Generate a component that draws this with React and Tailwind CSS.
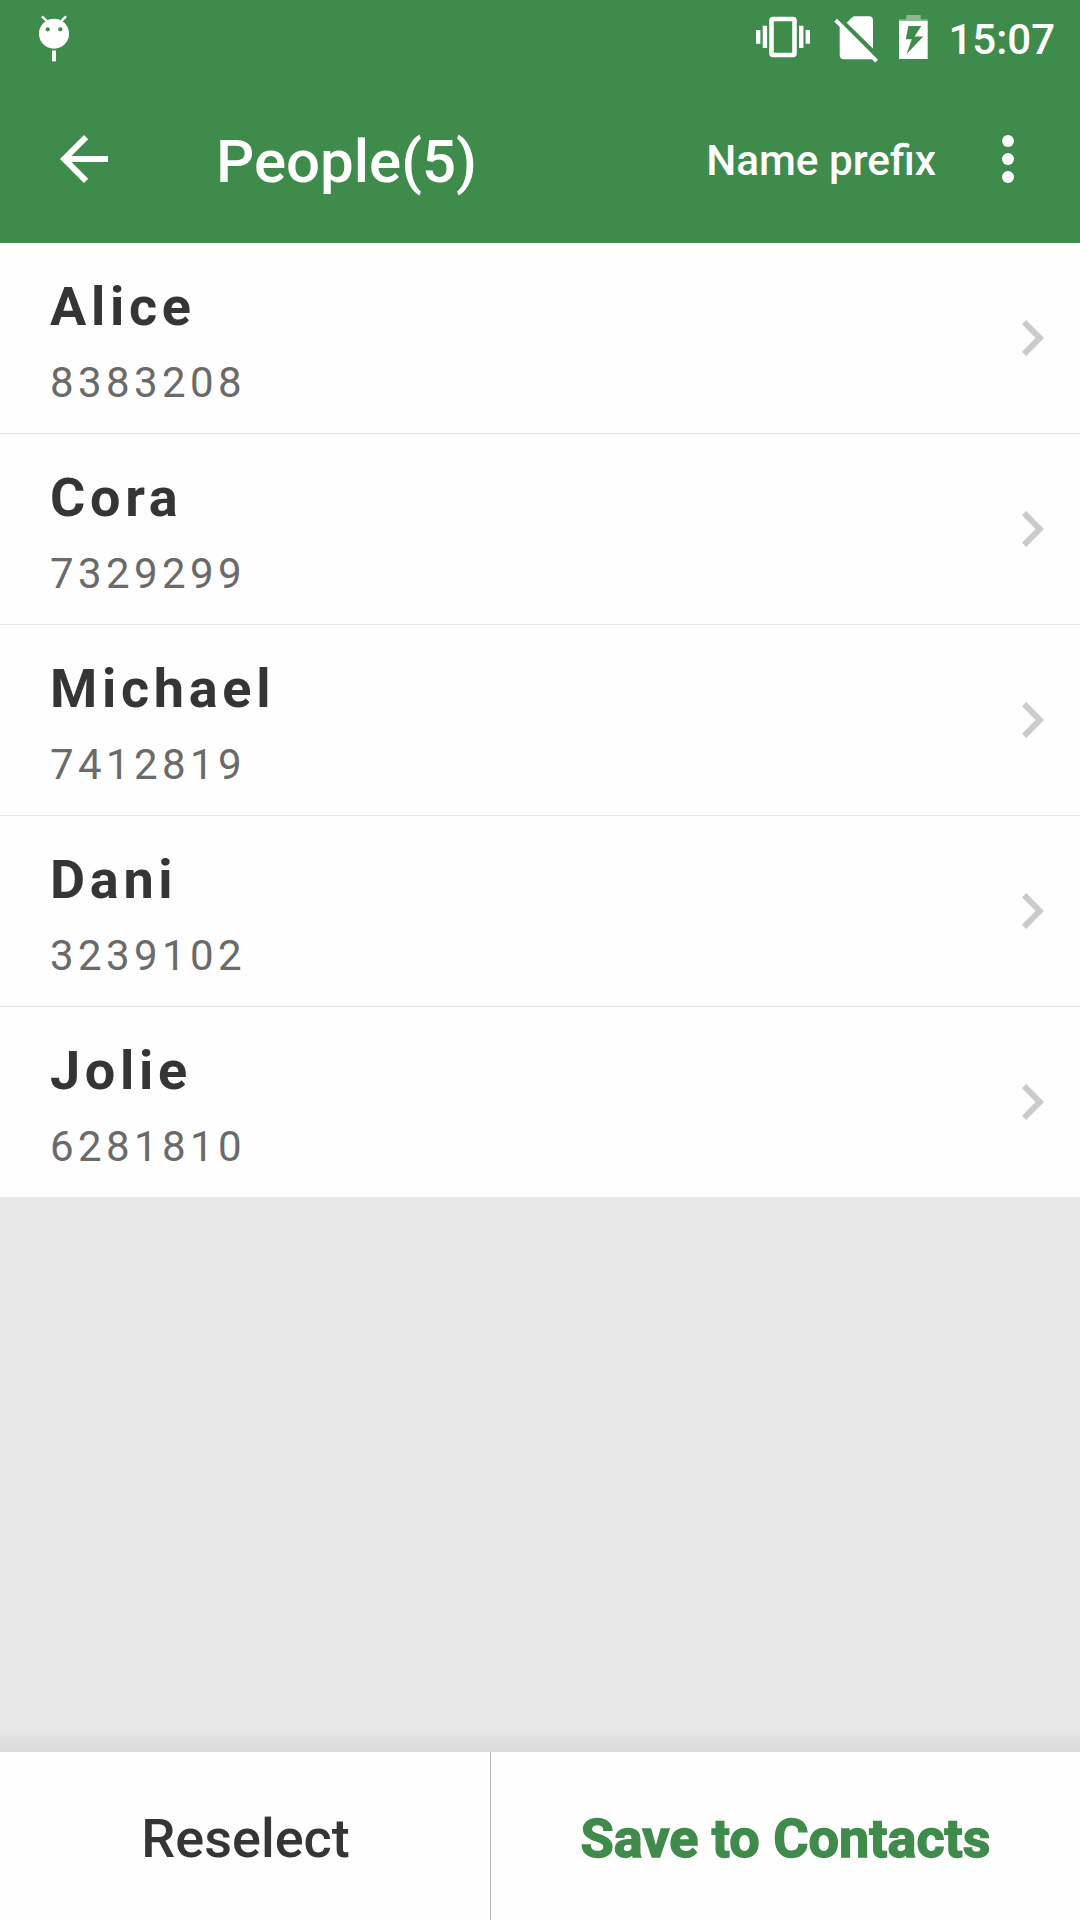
const people = [
  { name: 'Alice', number: '8383208' },
  { name: 'Cora', number: '7329299' },
  { name: 'Michael', number: '7412819' },
  { name: 'Dani', number: '3239102' },
  { name: 'Jolie', number: '6281810' },
];

function DebugIcon() {
  return (
    <svg viewBox="36 12 36 52" className="ml-9 mt-3 h-[52px] w-9">
      <path d="M42 16.3l5 5M66 16.3l-5 5" stroke="white" strokeWidth="2.4" />
      <circle cx="54" cy="33.7" r="15" fill="white" />
      <circle cx="47.7" cy="29.3" r="2.1" fill="#3f8b4c" />
      <circle cx="60.3" cy="29.3" r="2.1" fill="#3f8b4c" />
      <path d="M52 50.5h4v10.8h-4z" fill="white" />
    </svg>
  );
}

function VibrateIcon() {
  return (
    <svg viewBox="756 12 54 52" className="mt-3 h-[52px] w-[54px]">
      <rect x="771.5" y="19" width="23" height="36" rx="1.5" fill="none" stroke="white" strokeWidth="4.6" />
      <path d="M756 30h4.4v13.7H756zM762.7 25.7h4.4V48h-4.4zM799 25.7h4.4V48H799zM805.6 30h4.4v13.7h-4.4z" fill="white" />
    </svg>
  );
}

function NoSimIcon() {
  return (
    <svg viewBox="832 12 48 52" className="ml-[22px] mt-3 h-[52px] w-12" fill="white">
      <path d="M846.7 22.7l5-5q1.4-1.4 3.4-1.4H869q4 0 4 4v28.2z" />
      <path d="M834.2 21.6l2.8-2.8 41 41-2.8 2.8-3.4-3.4H844q-4.3 0-4.3-4.3V27.1z" />
    </svg>
  );
}

function BatteryIcon() {
  return (
    <svg viewBox="899 12 29 52" className="ml-[19px] mt-3 h-[52px] w-[29px]" fill="white">
      <path d="M906.3 15h14.4v4.3h7V21H899v-1.7h7.3z" opacity="0.4" />
      <path
        fillRule="evenodd"
        d="M899 21h28.7v38H899zM908.3 26L905.8 39.3H911.8L906.6 54L923.3 36.5H914.6L921.3 26z"
      />
    </svg>
  );
}

function StatusBar() {
  return (
    <div className="flex h-[75px] items-start justify-between pr-[25px]">
      <DebugIcon />
      <div className="flex items-start">
        <VibrateIcon />
        <NoSimIcon />
        <BatteryIcon />
        <span className="ml-5 mt-[15px] text-[42px] leading-[50px] font-medium">15:07</span>
      </div>
    </div>
  );
}

function AppBar() {
  return (
    <div className="flex h-42 items-center pr-[66px] pl-[60px]">
      <svg viewBox="0 0 48 48" className="h-12 w-12 shrink-0" fill="white">
        <path d="M48 21H11.5L28.2 4.2 24 0 0 24l24 24 4.2-4.2L11.5 27H48z" />
      </svg>
      <h1 className="ml-27 pt-1.5 text-[60px] leading-[70px] font-medium">People(5)</h1>
      <button className="ml-auto pt-[3px] text-[42.3px] leading-[50px] font-medium">Name prefix</button>
      <svg viewBox="0 0 12 48" className="ml-[66px] h-12 w-3 shrink-0" fill="white">
        <circle cx="6" cy="6" r="6" />
        <circle cx="6" cy="24" r="6" />
        <circle cx="6" cy="42" r="6" />
      </svg>
    </div>
  );
}

function PersonRow({ person }) {
  return (
    <li className="flex h-[191px] items-start justify-between border-b border-[#e5e5e5] bg-[#fefefe] pr-9 pl-[50px] last:h-[190px] last:border-b-0">
      <div className="pt-8">
        <p className="text-[54px] leading-[63px] font-bold tracking-[0.087em] text-[#353535]">{person.name}</p>
        <p className="mt-5 text-[42px] leading-[50px] tracking-[0.105em] text-[#6a6a6a]">{person.number}</p>
      </div>
      <svg viewBox="0 0 22 36" className="mt-[77px] h-9 w-[22px]" fill="#cbcbcb">
        <path d="M4.2 0L0 4.2 13.6 18 0 31.8 4.2 36 22 18z" />
      </svg>
    </li>
  );
}

export default function App() {
  return (
    <div className="flex h-[1920px] w-[1080px] flex-col overflow-hidden bg-[#e8e8e8] font-[Roboto,sans-serif]">
      <header className="bg-[#3f8b4c] text-white">
        <StatusBar />
        <AppBar />
      </header>

      <ul>
        {people.map((person) => (
          <PersonRow key={person.name} person={person} />
        ))}
      </ul>

      {/* Bottom actions */}
      <div className="mt-auto h-6 bg-linear-to-t from-[#d9d9d9] to-[#e8e8e8]" />
      <footer className="flex h-[168px] bg-[#fefefe] text-[54px] leading-[64px]">
        <button className="w-[491px] border-r border-[#bbb] pt-1.5 pl-px font-medium text-[#353535]">Reselect</button>
        <button className="flex-1 pt-1.5 font-bold text-[#3f8b4c] [-webkit-text-stroke:1.4px_#3f8b4c]">
          Save to Contacts
        </button>
      </footer>
    </div>
  );
}
